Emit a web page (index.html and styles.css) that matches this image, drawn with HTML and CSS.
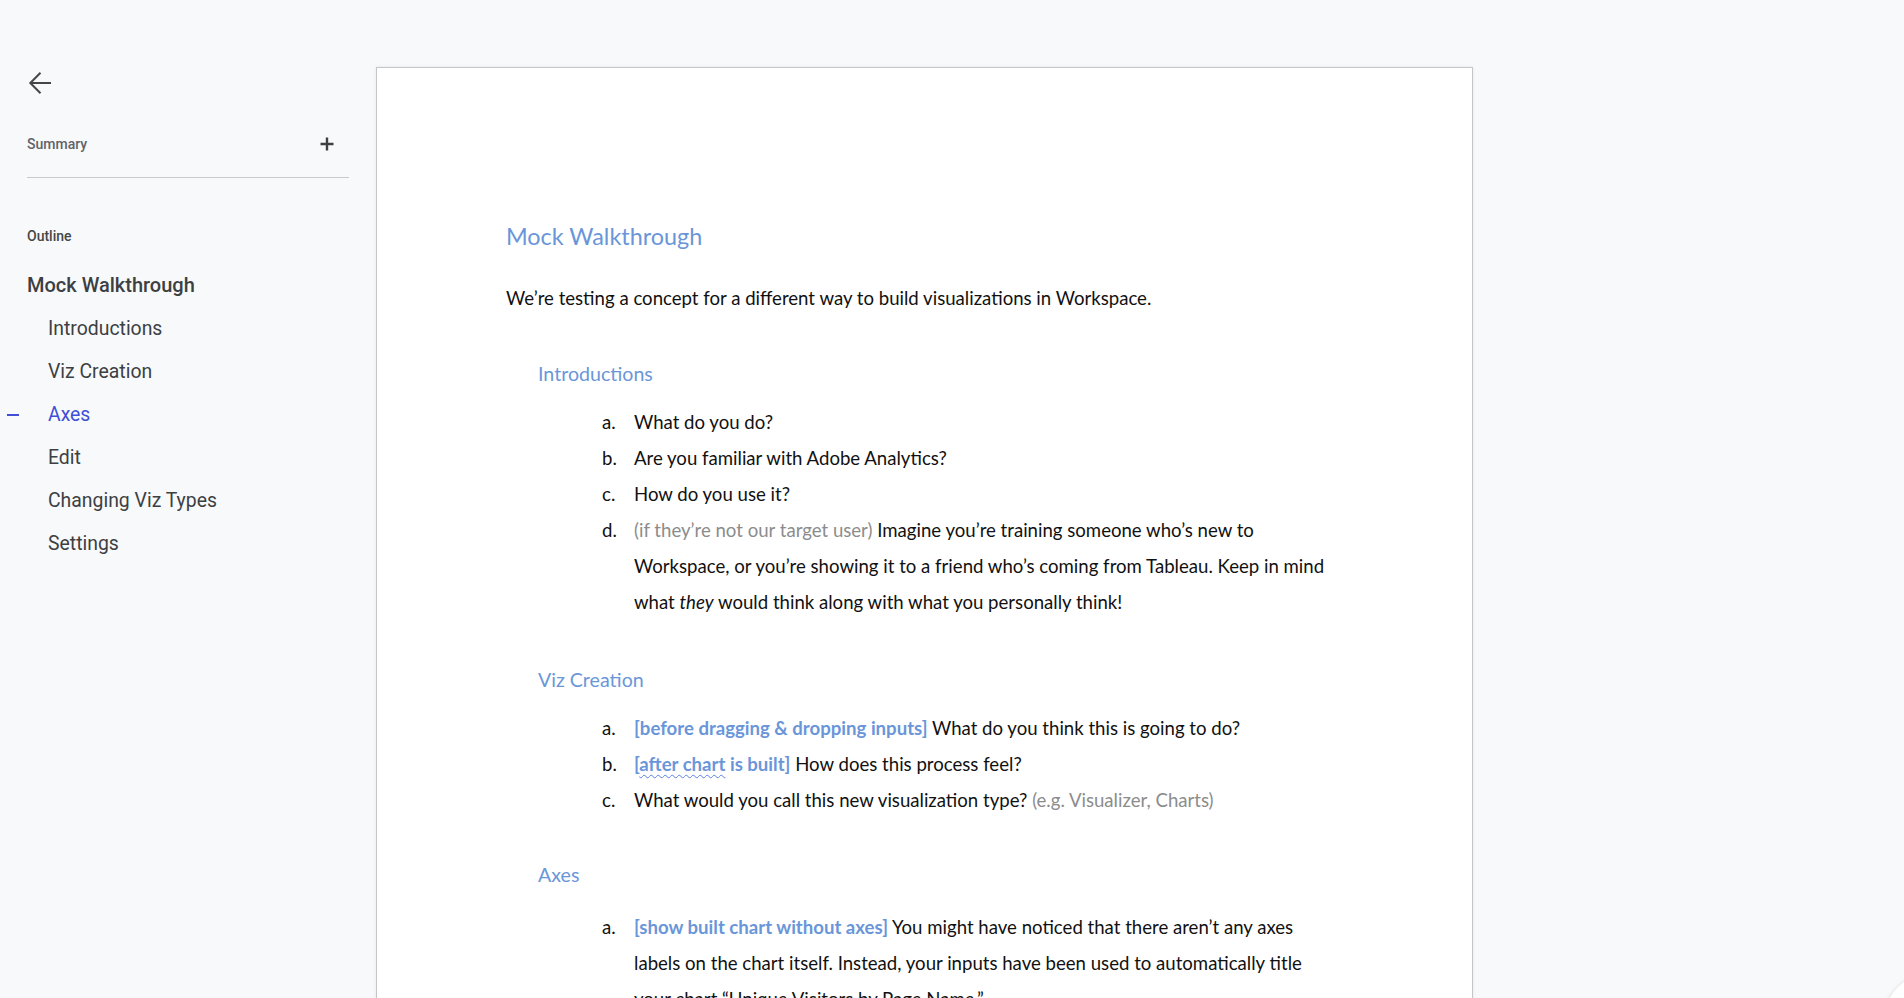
FILE: index.html
```html
<!DOCTYPE html>
<html lang="en">
<head>
<meta charset="utf-8">
<title>Mock Walkthrough</title>
<link rel="stylesheet" href="styles.css">
</head>
<body>
<div class="app">
  <aside class="sidebar">
    <button class="back" aria-label="Back">
      <svg width="24" height="24" viewBox="0 0 24 24"><path d="M2.5 12H23M12.5 1.8L2.3 12l10.2 10.2" fill="none" stroke="#444746" stroke-width="2"/></svg>
    </button>
    <div class="summary-row">
      <span class="summary-label">Summary</span>
      <svg class="plus" width="14" height="14" viewBox="0 0 14 14"><path d="M7 0.5V13.5M0.5 7H13.5" fill="none" stroke="#3c4043" stroke-width="2.4"/></svg>
    </div>
    <div class="divider"></div>
    <div class="outline-label">Outline</div>
    <ul class="outline">
      <li class="lvl1">Mock Walkthrough</li>
      <li class="lvl2">Introductions</li>
      <li class="lvl2">Viz Creation</li>
      <li class="lvl2 active">Axes</li>
      <li class="lvl2">Edit</li>
      <li class="lvl2">Changing Viz Types</li>
      <li class="lvl2">Settings</li>
    </ul>
  </aside>
  <main class="canvas">
    <div class="page">
      <h1 class="doc-title">Mock Walkthrough</h1>
      <p class="doc-p">We’re testing a concept for a different way to build visualizations in Workspace.</p>

      <h2 class="doc-h2 h-intro">Introductions</h2>
      <ol class="doc-list">
        <li>What do you do?</li>
        <li>Are you familiar with Adobe Analytics?</li>
        <li>How do you use it?</li>
        <li><span class="note">(if they’re not our target user)</span> Imagine you’re training someone who’s new to Workspace, or you’re showing it to a friend who’s coming from Tableau. Keep in mind what <em>they</em> would think along with what you personally think!</li>
      </ol>

      <h2 class="doc-h2 h-viz">Viz Creation</h2>
      <ol class="doc-list">
        <li><span class="tag">[before dragging &amp; dropping inputs]</span> What do you think this is going to do?</li>
        <li><span class="tag">[<span class="squiggle">after chart</span> is built]</span> How does this process feel?</li>
        <li>What would you call this new visualization type? <span class="note">(e.g. Visualizer, Charts)</span></li>
      </ol>

      <h2 class="doc-h2 h-axes">Axes</h2>
      <ol class="doc-list list-axes">
        <li><span class="tag">[show built chart without axes]</span> You might have noticed that there aren’t any axes labels on the chart itself. Instead, your inputs have been used to automatically title your chart “Unique Visitors by Page Name.”</li>
      </ol>
    </div>
  </main>
</div>
<div class="fab"></div>
</body>
</html>
```

FILE: styles.css
```css
html, body {
  margin: 0;
  padding: 0;
  height: 100%;
  overflow: hidden;
  background: #f8f9fb;
}

.app {
  display: flex;
  align-items: flex-start;
  height: 100%;
}

/* Sidebar */
.sidebar {
  flex: none;
  width: 349px;
  box-sizing: border-box;
  padding: 71px 0 0 27px;
  font-family: Roboto, "Noto Sans", sans-serif;
  color: #3c4043;
}

.back {
  display: block;
  width: 24px;
  height: 24px;
  padding: 0;
  margin: 0 0 0 1px;
  border: 0;
  background: none;
}
.back svg { display: block; }

.summary-row {
  display: flex;
  align-items: center;
  justify-content: space-between;
  height: 40px;
  margin-top: 29px;
  padding-right: 15px;
}

.summary-label {
  font-size: 14px;
  font-weight: 500;
  color: #5f6368;
}

.plus { display: block; }

.divider {
  height: 1px;
  background: #c9cacc;
  margin-top: 13px;
}

.outline-label {
  margin-top: 48px;
  height: 20px;
  line-height: 20px;
  font-size: 14px;
  font-weight: 500;
  color: #444746;
}

.outline {
  list-style: none;
  margin: 18px 0 0;
  padding: 0;
}

.outline li {
  height: 43px;
  line-height: 43px;
  font-size: 19.4px;
  white-space: nowrap;
}

.outline .lvl1 {
  font-size: 20px;
  font-weight: 500;
}

.outline .lvl2 {
  padding-left: 21px;
}

.outline .active {
  position: relative;
  color: #3f4fd6;
}

.outline .active::before {
  content: "";
  position: absolute;
  left: -20px;
  top: 21px;
  width: 12px;
  height: 2px;
  background: #3f4fd6;
}

/* Document canvas */
.canvas {
  flex: none;
  padding-left: 27px;
}

.page {
  width: 1097px;
  min-height: 1200px;
  box-sizing: border-box;
  margin-top: 67px;
  padding: 150px 130px 0 129px;
  background: #fff;
  border: 1px solid #c5c6c8;
  box-shadow: 0 0 3px rgba(0, 0, 0, 0.08);
  font-family: Lato, "Open Sans", sans-serif;
  color: #111;
}

.doc-title {
  margin: 0;
  font-size: 23.4px;
  font-weight: 400;
  line-height: 36px;
  color: #6a96d9;
}

.doc-p {
  margin: 26px 0 0;
  font-size: 18.6px;
  line-height: 36px;
}

.doc-h2 {
  margin: 40px 0 0 32px;
  font-size: 19.6px;
  font-weight: 400;
  line-height: 36px;
  color: #6a96d9;
}

.doc-h2.h-viz {
  margin-top: 42px;
}

.doc-h2.h-axes {
  margin-top: 39px;
}

.doc-list {
  list-style: none;
  counter-reset: item;
  margin: 12px 0 0;
  padding: 0 0 0 96px;
  font-size: 18.6px;
  line-height: 36px;
}

.doc-list li {
  counter-increment: item;
  padding-left: 32px;
  text-indent: -32px;
}

.doc-list li::before {
  content: counter(item, lower-alpha) ".";
  display: inline-block;
  width: 32px;
  text-indent: 0;
}

.doc-list.list-axes {
  margin-top: 16px;
}

.note {
  color: #8c8c8c;
}

.tag {
  color: #6a96d9;
  font-weight: 700;
}

.squiggle {
  text-decoration: underline wavy #5b7fe0;
  text-decoration-thickness: 1px;
  text-underline-offset: 3px;
}

.fab {
  position: fixed;
  right: -72px;
  bottom: -68px;
  width: 92px;
  height: 92px;
  border-radius: 50%;
  background: #fff;
  box-shadow: 0 1px 4px rgba(0, 0, 0, 0.18);
}
```
